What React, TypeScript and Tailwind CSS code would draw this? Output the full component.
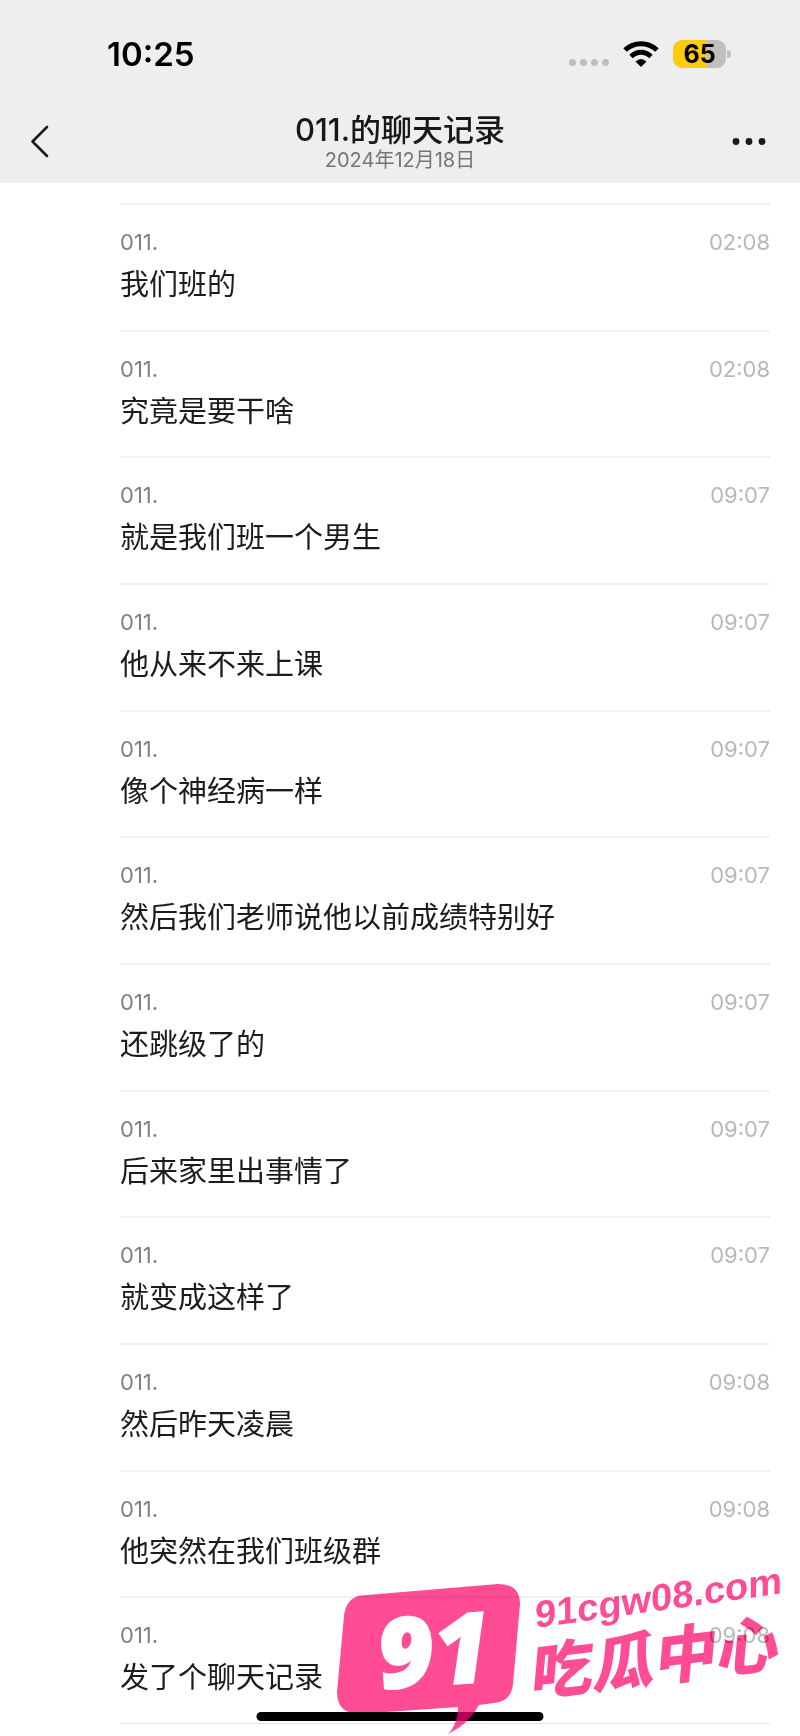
interface ChatRecord {
  sender: string;
  time: string;
  text: string;
}

const RECORDS: ChatRecord[] = [
  { sender: '011.', time: '02:08', text: '我们班的' },
  { sender: '011.', time: '02:08', text: '究竟是要干啥' },
  { sender: '011.', time: '09:07', text: '就是我们班一个男生' },
  { sender: '011.', time: '09:07', text: '他从来不来上课' },
  { sender: '011.', time: '09:07', text: '像个神经病一样' },
  { sender: '011.', time: '09:07', text: '然后我们老师说他以前成绩特别好' },
  { sender: '011.', time: '09:07', text: '还跳级了的' },
  { sender: '011.', time: '09:07', text: '后来家里出事情了' },
  { sender: '011.', time: '09:07', text: '就变成这样了' },
  { sender: '011.', time: '09:08', text: '然后昨天凌晨' },
  { sender: '011.', time: '09:08', text: '他突然在我们班级群' },
  { sender: '011.', time: '09:08', text: '发了个聊天记录' },
];

function WifiIcon() {
  return (
    <svg className="w-9 h-7" viewBox="0 0 36 28" fill="none" stroke="black" strokeWidth={5}>
      <path d="M2 10C11 1.500 25 1.500 34 10" />
      <path d="M8 16.500C14 10.800 22 10.800 28 16.500" strokeWidth={4.8} />
      <path d="M12.500 21.500Q18 16.500 23.500 21.500L18 27Z" fill="black" stroke="none" />
    </svg>
  );
}

function StatusBar() {
  return (
    <div className="flex items-center justify-between pl-[107px] pr-[69px] h-[108px]">
      <span className="text-[33px] leading-10 font-semibold text-black">10:25</span>
      <div className="flex items-center">
        <div className="flex gap-1 mt-4 mr-3.5">
          <span className="size-[7px] rounded-full bg-[#bdbdbd]" />
          <span className="size-[7px] rounded-full bg-[#bdbdbd]" />
          <span className="size-[7px] rounded-full bg-[#bdbdbd]" />
          <span className="size-[7px] rounded-full bg-[#bdbdbd]" />
        </div>
        <WifiIcon />
        <div className="flex items-center gap-px ml-3.5">
          <div className="w-[53px] h-7 rounded-[9px] bg-linear-to-r from-[#fccb0b] from-65% to-[#bfbfbf] to-65% flex items-center justify-center text-[25px] leading-7 font-bold text-black">
            65
          </div>
          <span className="w-1 h-2 rounded-r-full bg-[#bfbfbf]" />
        </div>
      </div>
    </div>
  );
}

function NavBar() {
  return (
    <div className="grid grid-cols-[1fr_auto_1fr] items-center h-[75px] px-6 pb-2">
      <button type="button" aria-label="返回" className="justify-self-start text-[#1a1a1a]">
        <svg
          className="w-8 h-9"
          viewBox="0 0 32 36"
          fill="none"
          stroke="currentColor"
          strokeWidth={2.6}
          strokeLinecap="round"
          strokeLinejoin="round"
        >
          <path d="M23 3L8.500 17.500L23 32" />
        </svg>
      </button>
      <div className="text-center">
        <h1 className="text-[31px] leading-9 font-medium text-[#181818]">011.的聊天记录</h1>
        <p className="text-[20px] leading-6 text-[#757575]">2024年12月18日</p>
      </div>
      <button type="button" aria-label="更多" className="justify-self-end text-[#1a1a1a] mr-2.5">
        <svg className="w-10 h-9" viewBox="0 0 40 36" fill="currentColor">
          <circle cx="10" cy="17.5" r="3.4" />
          <circle cx="23" cy="17.5" r="3.4" />
          <circle cx="36" cy="17.5" r="3.4" />
        </svg>
      </button>
    </div>
  );
}

function RecordRow({ record }: { record: ChatRecord }) {
  return (
    <li className="flex-1 border-t-2 border-[#f1f1f1] pt-5">
      <div className="flex items-center justify-between text-[22px] leading-[34px]">
        <span className="text-[#808080]">{record.sender}</span>
        <time className="text-[#b8b8b8]">{record.time}</time>
      </div>
      <p className="text-[29px] leading-[52px] text-[#1c1c1c]">{record.text}</p>
    </li>
  );
}

function SiteBadge() {
  return (
    <>
      <svg
        className="absolute right-0 bottom-0 w-[480px] h-[200px] pointer-events-none mix-blend-multiply overflow-visible"
        viewBox="0 -24 480 200"
        fill="#ff4c94"
      >
        <path d="M41 35.500L178 24Q200 24 200 44L193 124Q191 142 174 143L159 145Q149 164 128 174Q138 164 138 147L38 154Q17 153 17 132L24 56Q26 38 41 35.500Z" />
        <text
          transform="translate(60 129) rotate(-4)"
          className="font-['Open_Sans'] font-extrabold italic"
          fontSize="97"
          fill="white"
          stroke="white"
          strokeWidth="2"
        >
          91
        </text>
        <text
          transform="translate(215 68) skewY(-8)"
          className="font-['Liberation_Sans'] font-bold"
          fontSize="38"
        >
          91cgw08.com
        </text>
        <text
          transform="translate(210 136) skewY(-7) skewX(-5)"
          className="font-['Noto_Sans_CJK_SC'] font-black"
          fontSize="62"
        >
          吃瓜中心
        </text>
      </svg>
      {/* the bubble's tail where it crosses the home indicator */}
      <svg
        className="absolute right-0 bottom-0 w-[480px] h-[176px] pointer-events-none"
        viewBox="0 0 480 176"
        fill="#b5005a"
      >
        <path d="M138 152H154.500Q151 157 146 161H135.500Q137.500 157 138 152Z" />
      </svg>
    </>
  );
}

export default function App() {
  return (
    <div className="relative min-h-screen flex flex-col bg-white font-[Inter,'Noto_Sans_CJK_SC',sans-serif]">
      <header className="bg-[#eeeeee]">
        <StatusBar />
        <NavBar />
      </header>
      <main className="flex-1 flex flex-col pl-[120px] pr-[30px] pt-5 pb-3">
        <ul className="flex-1 flex flex-col border-b border-[#e8e8e8]">
          {RECORDS.map((record, index) => (
            <RecordRow key={index} record={record} />
          ))}
        </ul>
      </main>
      <div className="absolute bottom-[15px] left-1/2 -translate-x-1/2 w-[287px] h-[9px] rounded-full bg-black" />
      <SiteBadge />
    </div>
  );
}
